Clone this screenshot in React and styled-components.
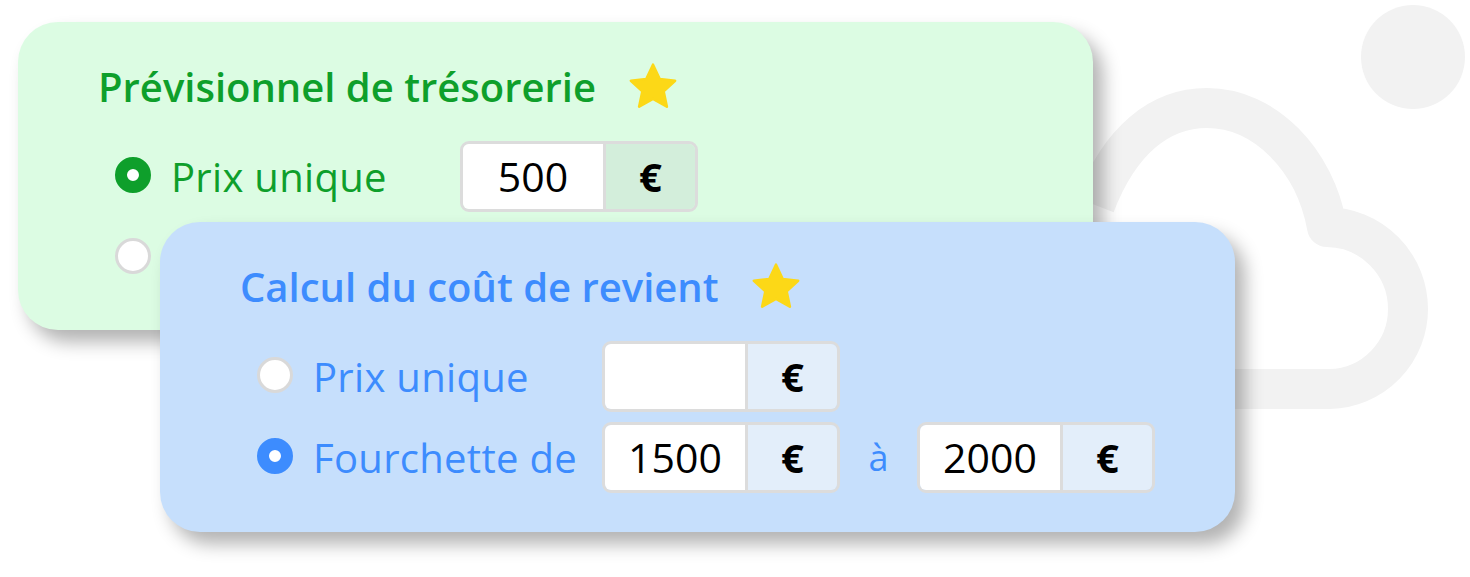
import React from "react";
import styled, { createGlobalStyle } from "styled-components";

const GlobalStyle = createGlobalStyle`
  body {
    margin: 0;
    background: #ffffff;
    font-family: "Open Sans", Lato, sans-serif;
  }
`;

const TONES = {
  green: { bg: "#dcfce3", text: "#0e9f2b", addon: "#d3eedb" },
  blue: { bg: "#c6dffc", text: "#3d8cfe", addon: "#e3eefa" },
};

const Stage = styled.div`
  position: relative;
  width: 1470px;
  height: 577px;
  overflow: hidden;
  display: flex;
  flex-direction: column;
  align-items: flex-start;
`;

const Cloud = styled.svg`
  position: absolute;
  inset: 0;
  z-index: 0;
`;

const Card = styled.section`
  position: relative;
  z-index: 1;
  box-sizing: border-box;
  width: 1075px;
  height: ${(p) => p.$height}px;
  margin-left: ${(p) => p.$left}px;
  margin-top: ${(p) => p.$top}px;
  padding: 40px 0 0 80px;
  border-radius: 40px;
  background: ${(p) => TONES[p.$tone].bg};
  color: ${(p) => TONES[p.$tone].text};
  box-shadow: 10px 12px 18px rgba(0, 0, 0, 0.3);
`;

const TitleRow = styled.div`
  display: flex;
  align-items: center;
  gap: 31px;
  height: 50px;
`;

const Title = styled.h2`
  margin: 0;
  font-size: 40px;
  font-weight: 600;
  line-height: 50px;
  color: inherit;
`;

const Star = () => (
  <svg width="52" height="50" viewBox="0 0 24 23">
    <path
      d="M12 1.2l3.1 6.6 7.1.8-5.3 4.9 1.5 7.1L12 17l-6.4 3.6 1.5-7.1-5.3-4.9 7.1-.8z"
      fill="#fcd817"
      stroke="#fcd817"
      strokeWidth="1.2"
      strokeLinejoin="round"
    />
  </svg>
);

const Rows = styled.div`
  display: flex;
  flex-direction: column;
  gap: 10px;
  margin-top: 29px;
  padding-left: 17px;
`;

const Row = styled.div`
  display: flex;
  align-items: center;
  height: 71px;
`;

const Radio = styled.span`
  box-sizing: border-box;
  width: 36px;
  height: 36px;
  flex: none;
  margin-bottom: 4px;
  border-radius: 50%;
  background: #ffffff;
  border: ${(p) => (p.$checked ? `12px solid ${TONES[p.$tone].text}` : "3px solid #d9d9d9")};
`;

const Label = styled.span`
  width: 289px;
  margin-left: 20px;
  font-size: 40px;
  letter-spacing: 0.3px;
  line-height: 71px;
  white-space: nowrap;
`;

const Field = styled.div`
  box-sizing: border-box;
  display: flex;
  width: 238px;
  height: 71px;
  border: 3px solid #dcdcdc;
  border-radius: 9px;
  overflow: hidden;
  color: #000000;
`;

const Value = styled.span`
  width: 140px;
  background: #ffffff;
  border-right: 3px solid #dcdcdc;
  text-align: center;
  font-size: 41px;
  line-height: 65px;
`;

const Addon = styled.span`
  flex: 1;
  background: ${(p) => TONES[p.$tone].addon};
  text-align: center;
  font-size: 40px;
  font-weight: 700;
  line-height: 65px;
`;

const Between = styled.span`
  width: 77px;
  text-align: center;
  font-size: 36px;
  line-height: 71px;
`;

const Money = ({ tone, value }) => (
  <Field>
    <Value>{value}</Value>
    <Addon $tone={tone}>€</Addon>
  </Field>
);

const PriceCard = ({ tone, title, rows, left, top, height }) => (
  <Card $tone={tone} $left={left} $top={top} $height={height}>
    <TitleRow>
      <Title>{title}</Title>
      <Star />
    </TitleRow>
    <Rows>
      {rows.map((row, i) => (
        <Row key={i}>
          <Radio $tone={tone} $checked={row.checked} />
          {row.label && <Label>{row.label}</Label>}
          {row.from !== undefined && <Money tone={tone} value={row.from} />}
          {row.to !== undefined && (
            <>
              <Between>à</Between>
              <Money tone={tone} value={row.to} />
            </>
          )}
        </Row>
      ))}
    </Rows>
  </Card>
);

export default function App() {
  return (
    <>
      <GlobalStyle />
      <Stage>
        <Cloud width="1470" height="577" viewBox="0 0 1470 577">
          <circle cx="1413" cy="57" r="52" fill="#f2f2f2" />
          <path
            d="M1095 205 C1120 140 1160 108 1207 108 C1265 108 1315 160 1327 227 A82 82 0 0 1 1408 309 A80 80 0 0 1 1330 389 L1000 389"
            fill="none"
            stroke="#f2f2f2"
            strokeWidth="40"
            strokeLinejoin="round"
          />
        </Cloud>
        <PriceCard
          tone="green"
          title="Prévisionnel de trésorerie"
          left={18}
          top={22}
          height={308}
          rows={[
            { label: "Prix unique", checked: true, from: "500" },
            { checked: false },
          ]}
        />
        <PriceCard
          tone="blue"
          title="Calcul du coût de revient"
          left={160}
          top={-108}
          height={310}
          rows={[
            { label: "Prix unique", checked: false, from: "" },
            { label: "Fourchette de", checked: true, from: "1500", to: "2000" },
          ]}
        />
      </Stage>
    </>
  );
}
